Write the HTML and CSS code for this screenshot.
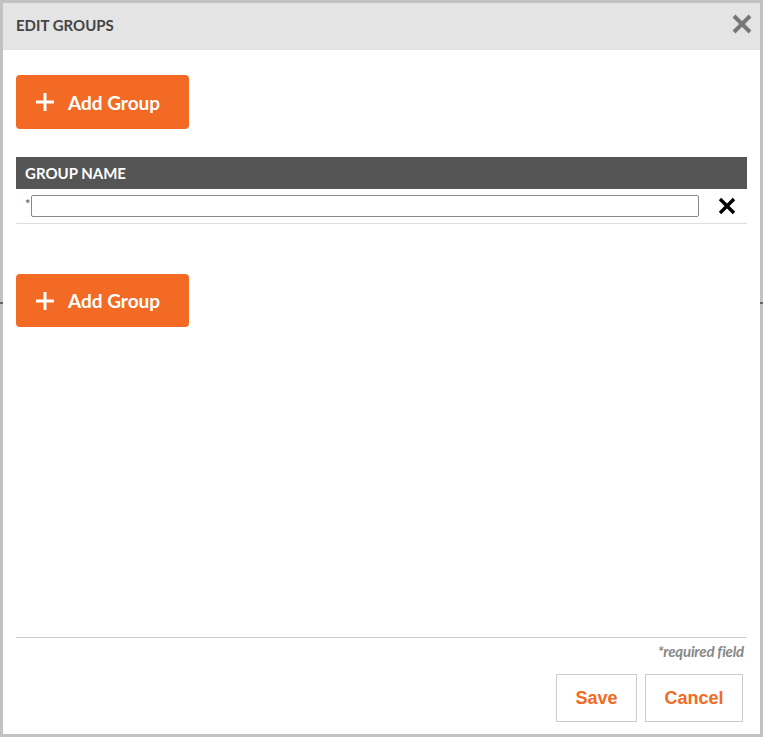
FILE: index.html
```html
<html>
    <head>
        <meta charset="utf-8" />
        <title>Edit Groups</title>
        <link rel="stylesheet" href="styles.css">
    </head>
    <body>
        <div class="modal">
            <div class="modal-head">
                <span class="modal-title">EDIT GROUPS</span>
                <span class="close">
                    <svg width="20" height="20" viewBox="0 0 20 20"><path d="M2 2L18 18M18 2L2 18" stroke="#777" stroke-width="4"/></svg>
                </span>
            </div>
            <div class="modal-body">
                <button class="btn-add">
                    <svg width="20" height="20" viewBox="0 0 20 20"><path d="M10 1V19M1 10H19" stroke="#fff" stroke-width="3"/></svg>
                    <span>Add Group</span>
                </button>
                <div class="groups">
                    <div class="groups-head">GROUP NAME</div>
                    <div class="groups-row">
                        <span class="req">*</span>
                        <input type="text" class="name-input">
                        <span class="remove">
                            <svg width="18" height="18" viewBox="0 0 18 18"><path d="M2 2L16 16M16 2L2 16" stroke="#000" stroke-width="3.4"/></svg>
                        </span>
                    </div>
                </div>
                <button class="btn-add btn-add-low">
                    <svg width="20" height="20" viewBox="0 0 20 20"><path d="M10 1V19M1 10H19" stroke="#fff" stroke-width="3"/></svg>
                    <span>Add Group</span>
                </button>
            </div>
            <div class="modal-foot">
                <div class="required">*required field</div>
                <div class="actions">
                    <button class="btn-plain btn-save">Save</button>
                    <button class="btn-plain btn-cancel">Cancel</button>
                </div>
            </div>
        </div>
    </body>
</html>
```

FILE: styles.css
```css
body {
    margin: 0;
    height: 737px;
    background: linear-gradient(to bottom, #c2c2c2 302px, #666 302px, #666 304px, #c2c2c2 304px);
    font-family: Lato, "Liberation Sans", sans-serif;
}
.modal {
    position: absolute;
    left: 3px;
    top: 3px;
    width: 757px;
    height: 731px;
    background: #fff;
    display: flex;
    flex-direction: column;
}
.modal-head {
    height: 47px;
    background: #e4e4e4;
    display: flex;
    align-items: center;
    justify-content: space-between;
    padding: 0 8px 0 13px;
}
.modal-title {
    font-size: 15px;
    font-weight: bold;
    color: #444;
    margin-top: -3px;
}
.close {
    display: flex;
    margin-top: -5px;
}
.modal-body {
    flex: 1;
    padding: 25px 13px 0 13px;
}
.btn-add {
    width: 173px;
    height: 54px;
    border: none;
    border-radius: 4px;
    background: #f26a24;
    color: #fff;
    font-family: Lato, "Liberation Sans", sans-serif;
    font-size: 19px;
    font-weight: bold;
    display: flex;
    align-items: center;
    padding: 0 0 0 19px;
    gap: 13px;
    cursor: pointer;
}
.btn-add-low {
    height: 53px;
}
.groups {
    margin: 28px 0 50px 0;
}
.groups-head {
    height: 32px;
    background: #555;
    color: #fff;
    font-size: 15px;
    font-weight: bold;
    line-height: 33px;
    padding-left: 9px;
}
.groups-row {
    height: 34px;
    border-bottom: solid 1px #ddd;
    display: flex;
    align-items: center;
    padding-left: 9px;
}
.req {
    font-size: 13px;
    color: #555;
    width: 6px;
    margin-top: -4px;
}
.name-input {
    width: 668px;
    height: 22px;
    border: solid 1px #888;
    border-radius: 2px;
    margin: 0;
    padding: 0 4px;
}
.remove {
    display: flex;
    margin-left: 19px;
}
.modal-foot {
    margin: 0 13px 0 13px;
    border-top: solid 1px #ccc;
    padding-bottom: 12px;
}
.required {
    text-align: right;
    font-size: 15px;
    font-style: italic;
    font-weight: bold;
    color: #888;
    padding: 4px 3px 0 0;
    letter-spacing: -0.2px;
}
.actions {
    display: flex;
    justify-content: flex-end;
    gap: 8px;
    margin-top: 14px;
    padding-right: 4px;
}
.btn-plain {
    height: 48px;
    background: #fff;
    border: solid 1px #ccc;
    color: #f26a24;
    font-family: "Liberation Sans", Arial, sans-serif;
    font-size: 18px;
    font-weight: bold;
    cursor: pointer;
}
.btn-save {
    width: 81px;
}
.btn-cancel {
    width: 98px;
}
```
